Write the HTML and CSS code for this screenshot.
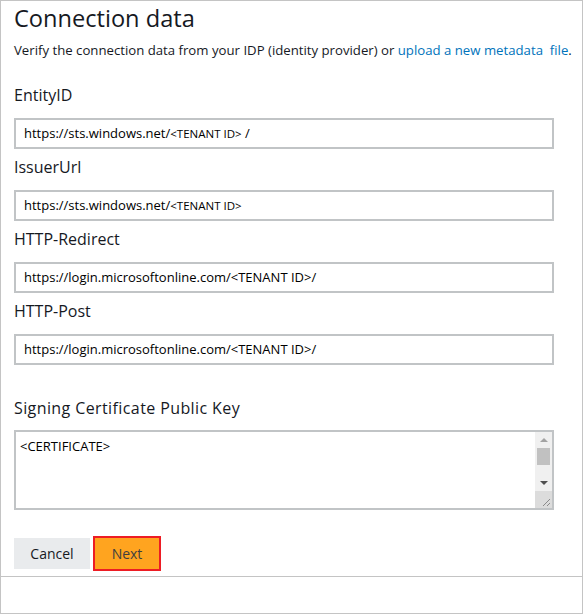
FILE: index.html
```html
<!DOCTYPE html>
<html lang="en">
<head>
<meta charset="utf-8">
<title>Connection data</title>
<link rel="stylesheet" href="styles.css">
</head>
<body>
<div class="panel">
  <div class="content">
    <h1 class="title">Connection data</h1>
    <p class="desc">Verify the connection data from your IDP (identity provider) or <a class="link" href="#">upload a new metadata&nbsp; file</a>.</p>
    <div class="fields">
      <div class="field">
        <div class="label">EntityID</div>
        <div class="input">https://sts.windows.net/<span class="small">&lt;TENANT ID&gt;</span> /</div>
      </div>
      <div class="field">
        <div class="label">IssuerUrl</div>
        <div class="input">https://sts.windows.net/<span class="small">&lt;TENANT ID&gt;</span></div>
      </div>
      <div class="field">
        <div class="label">HTTP-Redirect</div>
        <div class="input">https://login.microsoftonline.com/&lt;TENANT ID&gt;/</div>
      </div>
      <div class="field">
        <div class="label">HTTP-Post</div>
        <div class="input">https://login.microsoftonline.com/&lt;TENANT ID&gt;/</div>
      </div>
    </div>
    <div class="field cert">
      <div class="label label-wide">Signing Certificate Public Key</div>
      <div class="textarea">
        <div class="ta-text">&lt;CERTIFICATE&gt;</div>
        <div class="sb">
          <div class="sb-btn"><span class="arrow-up"></span></div>
          <div class="sb-thumb"></div>
          <div class="sb-space"></div>
          <div class="sb-btn"><span class="arrow-down"></span></div>
          <div class="sb-corner">
            <svg width="17" height="17" viewBox="0 0 17 17"><path d="M8 15 L15 8 M12 15 L15 12" stroke="#8a8a8a" stroke-width="1" fill="none"/></svg>
          </div>
        </div>
      </div>
    </div>
    <div class="actions">
      <button class="btn cancel" type="button">Cancel</button>
      <button class="btn next" type="button">Next</button>
    </div>
  </div>
  <div class="footer"></div>
</div>
</body>
</html>
```
FILE: styles.css
```css
html, body {
  margin: 0;
  padding: 0;
  background: #ffffff;
}
body {
  font-family: "Open Sans", "Noto Sans", sans-serif;
  color: #16191f;
}
.panel {
  width: 583px;
  height: 614px;
  box-sizing: border-box;
  border: 1px solid #c4c4c4;
  display: flex;
  flex-direction: column;
}
.content {
  flex: 1;
  padding: 3px 0 0 13px;
  display: flex;
  flex-direction: column;
}
.title {
  margin: 0;
  font-size: 23.6px;
  line-height: 28px;
  font-weight: 400;
  color: #16191f;
}
.desc {
  margin: 8px 0 0;
  font-size: 13.2px;
  line-height: 20px;
}
.link {
  color: #0073bb;
  text-decoration: none;
}
.fields {
  margin-top: 25px;
  display: flex;
  flex-direction: column;
  gap: 8px;
}
.field {
  display: flex;
  flex-direction: column;
}
.label {
  font-size: 16px;
  line-height: 20px;
  margin-bottom: 13px;
  color: #16191f;
}
.label-wide {
  letter-spacing: 0.4px;
}
.input {
  width: 540px;
  height: 31px;
  box-sizing: border-box;
  border: 2px solid #c1c4c6;
  padding: 0 0 0 8px;
  font-size: 13px;
  line-height: 27px;
  color: #000;
  white-space: nowrap;
}
.small {
  font-size: 11.5px;
}
.cert {
  margin-top: 33px;
}
.cert .label {
  margin-bottom: 12px;
}
.textarea {
  width: 540px;
  height: 80px;
  box-sizing: border-box;
  border: 2px solid #c1c4c6;
  display: flex;
}
.ta-text {
  flex: 1;
  padding: 5px 0 0 4px;
  font-size: 13px;
  line-height: 18px;
  color: #000;
}
.sb {
  width: 17px;
  background: #f0f0f0;
  display: flex;
  flex-direction: column;
}
.sb-btn {
  height: 17px;
  display: flex;
  align-items: center;
  justify-content: center;
}
.sb-btn:first-child {
  height: 16px;
}
.arrow-up {
  width: 0;
  height: 0;
  border-left: 4px solid transparent;
  border-right: 4px solid transparent;
  border-bottom: 4px solid #a3a3a3;
}
.arrow-down {
  width: 0;
  height: 0;
  border-left: 4px solid transparent;
  border-right: 4px solid transparent;
  border-top: 4px solid #505050;
}
.sb-thumb {
  height: 17px;
  margin: 0 2px;
  background: #c1c1c1;
}
.sb-space {
  flex: 1;
}
.sb-corner {
  height: 17px;
  background: #dcdcdc;
  display: flex;
}
.actions {
  margin-top: 28px;
  display: flex;
  gap: 5px;
}
.btn {
  height: 31px;
  border: none;
  padding: 0;
  font-family: "Open Sans", "Noto Sans", sans-serif;
  font-size: 14px;
  cursor: pointer;
}
.cancel {
  width: 76px;
  background: #e9ebed;
  color: #16191f;
}
.next {
  width: 64px;
  background: #ffa41f;
  color: #3f3f3f;
  outline: 2px solid #ed1c24;
}
.footer {
  height: 37px;
  border-top: 1px solid #c4c4c4;
  box-sizing: border-box;
}
```
